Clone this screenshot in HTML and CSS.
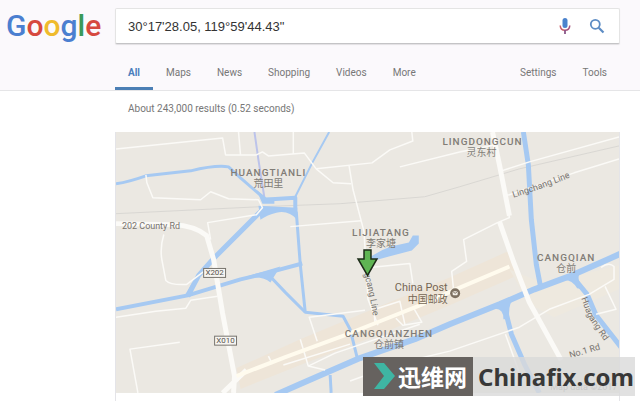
FILE: index.html
```html
<!DOCTYPE html>
<html lang="en">
<head>
  <meta charset="UTF-8">
  <title>30°17'28.05, 119°59'44.43" - Google Search</title>
  <link rel="stylesheet" href="styles.css">
</head>
<body>
  <header class="header">
    <div class="search-row">
      <a class="logo" href="#" aria-label="Google"><span class="blue">G</span><span class="red">o</span><span class="yellow">o</span><span class="blue">g</span><span class="green">l</span><span class="red">e</span></a>
      <form class="search-box">
        <input class="search-input" type="text" name="q" aria-label="Search" value="30°17'28.05, 119°59'44.43&quot;">
        <button class="icon-button" type="button" aria-label="Search by voice">
          <svg width="12" height="18" viewBox="0 0 12 18">
            <rect x="3.5" y="1" width="5" height="10" rx="2.5" fill="#4b83cd"/>
            <path d="M1.2 8.5Q1.5 13.3 6 13.3" fill="none" stroke="#c9606c" stroke-width="1.5"/>
            <path d="M6 13.3Q10.5 13.3 10.8 8.5" fill="none" stroke="#a8547e" stroke-width="1.5"/>
            <path d="M6 13v4" stroke="#8a5688" stroke-width="1.8"/>
          </svg>
        </button>
        <button class="icon-button" type="submit" aria-label="Search">
          <svg width="16" height="16" viewBox="0 0 16 16" fill="none" stroke="#5d8cc4">
            <circle cx="6.3" cy="6.3" r="4.5" stroke-width="1.8"/>
            <path d="M9.7 9.7L14.5 14.5" stroke-width="2.2"/>
          </svg>
        </button>
      </form>
    </div>
    <nav class="tabs">
      <a class="tab active" href="#">All</a>
      <a class="tab" href="#">Maps</a>
      <a class="tab" href="#">News</a>
      <a class="tab" href="#">Shopping</a>
      <a class="tab" href="#">Videos</a>
      <a class="tab" href="#">More</a>
      <a class="tab tools" href="#">Settings</a>
      <a class="tab" href="#">Tools</a>
    </nav>
  </header>

  <main class="results">
    <p class="stats">About 243,000 results (0.52 seconds)</p>
    <div class="map-card">
      <svg class="map" viewBox="115 132 505 262" role="img" aria-label="Map">
        <rect x="115" y="132" width="505" height="262" fill="#ebe8e2"/>

        <!-- built-up area along the main road -->
        <path d="M236 369L300 340L375 309L450 278L508 252L518 276L450 306L375 337L300 366L240 390Z" fill="#eee5d8"/>
        <path d="M510 270L545 284L620 266V290L555 318L530 305Z" fill="#eee9df"/>

        <!-- railway -->
        <path class="rail" d="M115 214L260 207L340 204L425 197L460 187L520 169L620 146"/>

        <!-- water -->
        <g class="water">
          <path stroke-width="3" d="M115 184Q128 182 145 176L190 171Q215 165 228 167L240 178L264 199"/>
          <path class="stream" stroke-width="2" d="M254 132L258 160L264 198"/>
          <path stroke-width="2" d="M329 132L312 163L295 197"/>
          <path stroke-width="4" d="M263 200L295 198V212"/>
          <path stroke-width="5" d="M260 212L213 259L198 276L187 297"/>
          <path stroke-width="3" d="M296 212L300 265L305 313"/>
          <path stroke-width="4" d="M115 310L187 296L240 280L265 274L302 264"/>
          <path stroke-width="3" d="M268 275L285 293L305 313L343 317L350 330L357 358"/>
          <path stroke-width="6" d="M275 396L300 385L360 359L415 340L450 325L500 305L535 290L570 277L622 254"/>
          <path stroke-width="3" d="M330 376L331 394"/>
          <path stroke-width="5" d="M524 132L529 165L532 220L537 265L541 286"/>
          <path stroke-width="5" d="M505 308L512 335L525 365L540 394"/>
          <path stroke-width="5" d="M574 278L588 295L597 316L622 348"/>
        </g>
        <g class="lake">
          <path d="M258 206L297 208V220Q288 210 276 213Q267 215 260 220Z"/>
          <path d="M256 190L266 198H274V204H262Z"/>
          <path d="M183 298L192 282L191 296Z"/>
          <path d="M246 277L280 267L270 283Q262 276 246 279Z"/>
          <path d="M492 307L516 298Q508 304 510 320H504Q504 307 492 310Z"/>
          <path d="M562 279L582 272Q576 278 584 290L578 289Q572 279 562 281Z"/>
          <path d="M360 265Q376 252 391 247L409 243L413 236H419V244L412 251L389 257Z"/>
        </g>

        <!-- roads -->
        <g class="road">
          <path d="M115 149L222 138L225 155L256 155L262 152L268 156L304 153L316 169L333 183L351 184"/>
          <path d="M238 132L240 155M293 132V154"/>
          <path d="M145 175L146 183L152 198L200 200L210 192L228 199L258 200L262 208L256 215L207 223L210 240"/>
          <path d="M163 235Q159 248 161 260L165 281Q170 286 186 285L206 270"/>
          <path d="M412 132L413 141L390 150L372 163L316 169"/>
          <path d="M349 166L353 190L364 232L368 300L378 326"/>
          <path d="M290 227L361 221M400 167L460 152L495 145"/>
          <path d="M115 318L155 312L185 309L190 301L217 297"/>
          <path d="M137 394L129 350L179 343"/>
          <path d="M493 132L500 165L510 218L498 223L464 240L467 262L452 272L454 291"/>
          <path d="M502 171L530 162L620 137M504 196L510 195L575 173L620 159"/>
          <path d="M370 268L410 264L413 284M374 310L375 324"/>
          <path d="M365 311L309 318L317 342M300 340L308 367L325 371M308 367L335 354L420 325"/>
          <path d="M375 310L400 302L405 325M414 309L422 323L403 326L396 319"/>
          <path d="M283 366L350 345M350 382L400 364L450 352L520 328L550 310L590 295L615 280L615 267Q610 262 602 268"/>
          <path d="M506 335L520 374M606 287L617 310L597 315M268 357L272 365"/>
        </g>
        <path class="road wide" d="M115 224L172 225Q194 226 206 236L213 260L222 314L234 377L233 394M222 394L246 371"/>
        <path class="road wide" d="M493 132L500 165L510 216M500 222L514 262L530 303L562 361"/>
        <path class="road main" d="M236 377L285 358L345 336L380 322L420 306L456 290L510 267"/>

        <!-- road shields -->
        <g class="shield">
          <rect x="203" y="269" width="22" height="9"/>
          <text x="214" y="276">X202</text>
          <rect x="214" y="337" width="22" height="9"/>
          <text x="225" y="344">X010</text>
        </g>

        <!-- place names -->
        <g class="place">
          <text x="268" y="176">HUANGTIANLI</text>
          <text x="268" y="187" class="cjk">荒田里</text>
          <text x="483" y="145">LINGDONGCUN</text>
          <text x="482" y="156" class="cjk">灵东村</text>
          <text x="381" y="236">LIJIATANG</text>
          <text x="381" y="247" class="cjk">李家塘</text>
          <text x="567" y="262">CANGQIAN</text>
          <text x="567" y="273" class="cjk">仓前</text>
          <text x="389" y="338">CANGQIANZHEN</text>
          <text x="389" y="349" class="cjk">仓前镇</text>
        </g>

        <!-- street names -->
        <defs>
          <path id="lingchang" d="M514 198L536 191L578 175"/>
          <path id="cang" d="M364 274L370 298L374 322"/>
          <path id="huagang" d="M582 299L589 318L604 340"/>
        </defs>
        <g class="street">
          <text x="121" y="229">202 County Rd</text>
          <text><textPath href="#lingchang">Lingchang Line</textPath></text>
          <text><textPath href="#cang">gcang Line</textPath></text>
          <text><textPath href="#huagang">Huagang Rd</textPath></text>
          <text transform="translate(571 359) rotate(-16)">No.1 Rd</text>
        </g>
        <g class="poi">
          <text x="448" y="292">China Post</text>
          <text x="448" y="304" class="cjk">中国邮政</text>
          <circle cx="455.5" cy="294" r="5" fill="#7d7061"/>
          <rect x="453" y="292" width="5" height="4" rx="1" fill="#f4f0e9"/>
          <path d="M453 292L455.5 294L458 292" fill="none" stroke="#7d7061"/>
        </g>

        <!-- marker -->
        <path d="M364 250.5H371V259.5H377L367.5 276L358 259.5H364Z" fill="#5fb453" stroke="#1d2b19" stroke-width="1.5"/>
        <text x="551" y="391" class="credit">Map data ©2017</text>
      </svg>

      <div class="watermark">
        <div class="watermark-brand">
          <svg width="22" height="26" viewBox="0 0 22 26">
            <path d="M0 0H10L21 13L10 26H0L10 13Z" fill="#3fb5a3"/>
          </svg>
          <span>迅维网</span>
        </div>
        <div class="watermark-site">Chinafix.com</div>
      </div>
    </div>
  </main>
</body>
</html>
```

FILE: styles.css
```css
body {
  margin: 0;
  background-color: #fff;
  font-family: Roboto, "Noto Sans CJK SC", sans-serif;
  font-size: 10px;
  color: #777;
}

a {
  text-decoration: none;
}

.header {
  padding: 8px 20px 0 0;
  background-color: #fbf9fc;
  border-bottom: 1px solid #e5e5e7;
}

.search-row {
  display: grid;
  grid-template-columns: 115px 1fr;
}

.logo {
  padding-left: 6px;
  font-size: 30px;
  font-weight: 500;
  line-height: 36px;
}

.blue { color: #4b7fd0; }
.red { color: #d6493f; }
.yellow { color: #efbb2d; }
.green { color: #3b9a58; }

.search-box {
  display: flex;
  align-items: center;
  gap: 12px;
  height: 36px;
  padding-right: 12px;
  background-color: #fff;
  border: 1px solid #e4e4e4;
  border-bottom-color: #c4c4c6;
  border-radius: 2px;
  box-sizing: border-box;
  box-shadow: 0 1px 1px rgba(0, 0, 0, 0.1);
}

.search-input {
  flex: 1;
  min-width: 0;
  padding: 0 12px;
  border: 0;
  outline: 0;
  background: transparent;
  font-family: "Liberation Sans", Arial, sans-serif;
  font-size: 13px;
  color: #333;
}

.icon-button {
  display: flex;
  align-items: center;
  justify-content: center;
  width: 20px;
  height: 24px;
  padding: 0;
  border: 0;
  background: none;
  cursor: pointer;
}

.tabs {
  display: flex;
  margin-top: 15px;
  padding-left: 115px;
}

.tab {
  padding: 0 13px;
  color: #777;
  line-height: 28px;
  border-bottom: 3px solid transparent;
}

.tab.active {
  color: #4b7fbd;
  font-weight: bold;
  border-bottom-color: #4b7fb5;
}

.tab.tools {
  margin-left: auto;
}

.results {
  padding: 0 20px 0 115px;
}

.stats {
  margin: 0;
  padding: 10px 13px 16px;
  line-height: 15px;
}

.map-card {
  position: relative;
  padding-bottom: 8px;
  border-left: 1px solid #e4e4e8;
  border-right: 1px solid #e4e4e8;
}

.map {
  display: block;
  width: 100%;
}

.water path {
  fill: none;
  stroke: #a6c9f2;
  stroke-linejoin: round;
}

.water .stream {
  stroke: #bcc3ea;
}

.lake {
  fill: #a6c9f2;
}

.rail {
  fill: none;
  stroke: #d9d7d3;
}

.road {
  fill: none;
  stroke: #fbfaf7;
  stroke-width: 1.5;
  stroke-linejoin: round;
}

.road.wide {
  stroke-width: 5;
}

.road.main {
  stroke: #fffbee;
  stroke-width: 4;
}

.shield rect {
  fill: #f7f5f1;
  stroke: #77746e;
}

.shield text {
  font-size: 8px;
  fill: #55524d;
  text-anchor: middle;
}

.place text {
  font-size: 10px;
  font-weight: 500;
  letter-spacing: 1px;
  fill: #817c76;
  text-anchor: middle;
}

.place .cjk {
  font-weight: 400;
  letter-spacing: 0;
}

.street text {
  font-size: 9px;
  fill: #77736e;
}

.poi text {
  font-size: 11px;
  fill: #756654;
  text-anchor: end;
}

.poi .cjk {
  font-size: 10px;
}

.credit {
  font-size: 9px;
  fill: #888;
}

.watermark {
  position: absolute;
  right: -16px;
  bottom: 5px;
  display: flex;
  height: 39px;
  font-weight: bold;
}

.watermark-brand {
  display: flex;
  align-items: center;
  gap: 2px;
  padding: 0 6px 0 11px;
  background-color: #66625f;
  color: #fff;
  font-family: "Noto Sans CJK SC", sans-serif;
  font-size: 23px;
  line-height: 39px;
}

.watermark-site {
  padding: 0 1px 0 5px;
  background-color: rgba(218, 218, 218, 0.8);
  color: #383838;
  font-family: "Noto Sans", sans-serif;
  font-size: 24px;
  line-height: 39px;
}
```
